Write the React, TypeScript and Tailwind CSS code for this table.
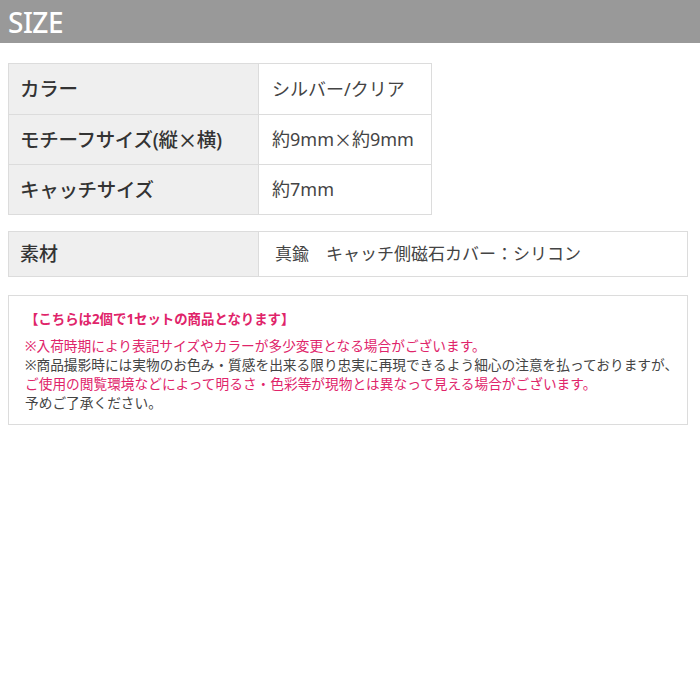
import React from "react";

const font = { fontFamily: '"Noto Sans", "Noto Sans CJK JP", sans-serif' };
const cjk = { fontFamily: '"Noto Sans CJK JP", sans-serif' };

export default function App() {
  const rows: [React.ReactNode, React.ReactNode][] = [
    ["カラー", "シルバー/クリア"],
    [
      <>モチーフサイズ(縦<span style={cjk}>×</span>横)</>,
      <>約9mm<span style={cjk}>×</span>約9mm</>,
    ],
    ["キャッチサイズ", "約7mm"],
  ];
  return (
    <div className="w-[700px] h-[700px] bg-white" style={font}>
      <div className="h-[43px] bg-[#999999] flex items-center pl-[8px]">
        <span className="text-white text-[28px] font-medium tracking-[-0.5px] leading-none">SIZE</span>
      </div>
      <div className="px-[8px] pt-[20px]">
        <div className="w-[424px] border border-[#dcdcdc]">
          {rows.map((r, i) => (
            <div key={i} className={`flex h-[50px] ${i > 0 ? "border-t border-[#dcdcdc]" : ""}`}>
              <div className="w-[250px] bg-[#efefef] border-r border-[#dcdcdc] flex items-center pl-[11px] text-[19.5px] text-[#333] font-medium tracking-[-0.3px]">
                {r[0]}
              </div>
              <div className="flex-1 flex items-center pl-[13px] text-[18px] text-[#444]">{r[1]}</div>
            </div>
          ))}
        </div>
        <div className="mt-[16px] w-[680px] h-[46px] border border-[#dcdcdc] flex">
          <div className="w-[250px] bg-[#efefef] border-r border-[#dcdcdc] flex items-center pl-[11px] text-[19px] text-[#333] font-medium">
            素材
          </div>
          <div className="flex-1 flex items-center pl-[16px] text-[17px] text-[#444]">
            真鍮　キャッチ側磁石カバー：シリコン
          </div>
        </div>
        <div className="mt-[18px] w-[680px] h-[130px] border border-[#dcdcdc] pl-[16px] pt-[14px]">
          <div className="text-[13.4px] font-bold text-[#e0246a] leading-[19px]">【こちらは2個で1セットの商品となります】</div>
          <div className="mt-[7px] text-[13.7px] leading-[19px] text-[#444] whitespace-nowrap">
            <div className="text-[#e0246a]">※入荷時期により表記サイズやカラーが多少変更となる場合がございます。</div>
            <div>※商品撮影時には実物のお色み・質感を出来る限り忠実に再現できるよう細心の注意を払っておりますが、</div>
            <div className="text-[#e0246a]">ご使用の閲覧環境などによって明るさ・色彩等が現物とは異なって見える場合がございます。</div>
            <div>予めご了承ください。</div>
          </div>
        </div>
      </div>
    </div>
  );
}
